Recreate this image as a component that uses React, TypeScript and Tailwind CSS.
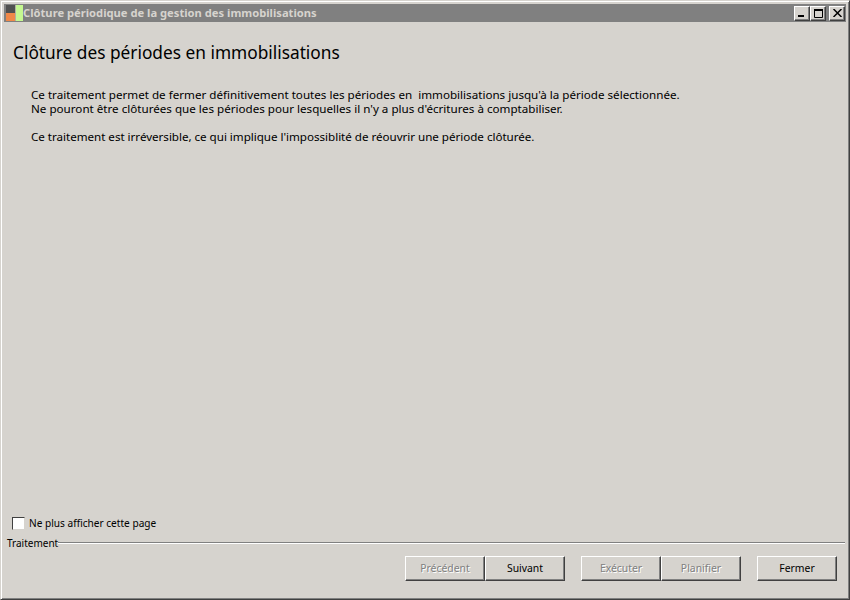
const font = { fontFamily: '"Noto Sans", Tahoma, sans-serif' };

function WinButton({ label, disabled }: { label: string; disabled?: boolean }) {
  return (
    <button
      className={`w-[80px] h-[25px] bg-[#d6d3ce] border border-t-white border-l-white border-r-[#404040] border-b-[#404040] shadow-[inset_-1px_-1px_0_#808080] text-[10.4px] ${
        disabled ? "text-[#808080] [text-shadow:1px_1px_0_#ffffff]" : "text-black"
      }`}
    >
      {label}
    </button>
  );
}

function CaptionButton({ children }: { children: React.ReactNode }) {
  return (
    <div className="w-[16px] h-[15px] bg-[#d6d3ce] border border-t-white border-l-white border-r-[#404040] border-b-[#404040] shadow-[inset_-1px_-1px_0_#808080] flex items-center justify-center">
      {children}
    </div>
  );
}

export default function App() {
  return (
    <div
      style={font}
      className="w-[850px] h-[600px] overflow-hidden flex flex-col bg-[#d6d3ce] border border-t-[#d6d3ce] border-l-[#d6d3ce] border-r-[#404040] border-b-[#404040] shadow-[inset_1px_1px_0_#ffffff,inset_-1px_-1px_0_#808080] p-[3px] pb-[2px]"
    >
      {/* Title bar */}
      <div className="h-[18px] shrink-0 bg-[#808080] flex items-center pl-[1px] pr-[1px]">
        <svg width="18" height="18" viewBox="0 0 18 18" className="shrink-0">
          <rect x="1" y="1" width="9" height="8" fill="#505050" />
          <rect x="1" y="9" width="9" height="8" fill="#f08848" />
          <rect x="10" y="1" width="1" height="16" fill="#b0b0a0" />
          <rect x="11" y="1" width="7" height="16" fill="#c4f890" />
        </svg>
        <span className="text-[11.2px] font-bold text-[#d6d3ce] leading-none">
          Clôture périodique de la gestion des immobilisations
        </span>
        <div className="ml-auto flex items-center">
          <CaptionButton>
            <svg width="8" height="8" viewBox="0 0 8 8">
              <rect x="0" y="6" width="6" height="2" fill="#000" />
            </svg>
          </CaptionButton>
          <CaptionButton>
            <svg width="9" height="9" viewBox="0 0 9 9">
              <path d="M0.5 1.5H8.5V8.5H0.5Z" fill="none" stroke="#000" />
              <rect x="0" y="0" width="9" height="2" fill="#000" />
            </svg>
          </CaptionButton>
          <div className="ml-[3px]">
            <CaptionButton>
              <svg width="9" height="8" viewBox="0 0 9 8">
                <path d="M0.5 0L8.5 8M8.5 0L0.5 8" stroke="#000" strokeWidth="1.5" />
              </svg>
            </CaptionButton>
          </div>
        </div>
      </div>

      {/* Content */}
      <div className="flex-1 flex flex-col">
        <h1 className="mt-[19px] ml-[9px] text-[17.3px] leading-[24px] text-black">
          Clôture des périodes en immobilisations
        </h1>
        <div className="mt-[23px] ml-[27px] text-[11.64px] leading-[14px] text-black">
          <p>Ce traitement permet de fermer définitivement toutes les périodes en&nbsp; immobilisations jusqu'à la période sélectionnée.</p>
          <p>Ne pouront être clôturées que les périodes pour lesquelles il n'y a plus d'écritures à comptabiliser.</p>
          <p className="mt-[14px] tracking-[-0.03px]">Ce traitement est irréversible, ce qui implique l'impossiblité de réouvrir une période clôturée.</p>
        </div>

        <div className="mt-auto">
          <label className="ml-[8px] flex items-center gap-[4px] text-[10.1px] leading-[14px] text-black">
            <span className="w-[13px] h-[13px] bg-white border border-t-[#404040] border-l-[#404040] border-r-[#d6d3ce] border-b-[#d6d3ce]" />
            Ne plus afficher cette page
          </label>
          <div className="mt-[6px] ml-[3px] mr-[1px] flex items-center text-[10px] leading-[14px] text-black">
            <span>Traitement</span>
            <div className="flex-1 h-[2px] border-t border-t-[#808080] border-b border-b-white" />
          </div>
          <div className="mt-[6px] mb-[16px] mr-[9px] flex justify-end">
            <WinButton label="Précédent" disabled />
            <WinButton label="Suivant" />
            <div className="ml-[16px] flex">
              <WinButton label="Exécuter" disabled />
              <WinButton label="Planifier" disabled />
            </div>
            <div className="ml-[16px] flex">
              <WinButton label="Fermer" />
            </div>
          </div>
        </div>
      </div>
    </div>
  );
}
